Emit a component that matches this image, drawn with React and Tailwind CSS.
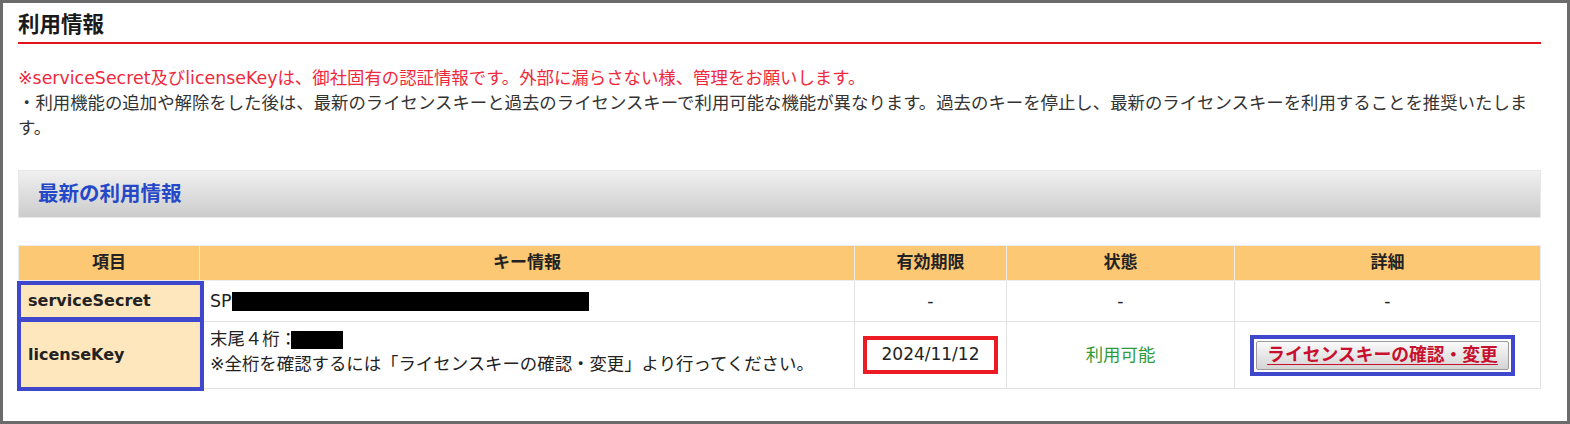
export default function App() {
  const cellB = "border-r border-b border-[#e2e2e2]";
  return (
    <div className="w-[1570px] h-[424px] box-border border-[3px] border-[#6b6b6b] bg-white pl-[15px] pr-[26px] pt-[7px] font-['DejaVu_Sans','Noto_Sans_CJK_JP',sans-serif] text-[#333]">
      <h2 className="text-[21.5px] leading-[30px] font-bold text-[#1a1a1a] pb-[2px] border-b-2 border-[#e3131b]">
        利用情報
      </h2>
      <div className="mt-[22px] text-[17.4px] leading-[25px]">
        <p className="text-[#f0283c]">
          ※serviceSecret及びlicenseKeyは、御社固有の認証情報です。外部に漏らさない様、管理をお願いします。
        </p>
        <p>
          ・利用機能の追加や解除をした後は、最新のライセンスキーと過去のライセンスキーで利用可能な機能が異なります。過去のキーを停止し、最新のライセンスキーを利用することを推奨いたします。
        </p>
      </div>
      <div className="mt-[29px] h-[48px] bg-linear-to-b from-[#f0f0f0] to-[#cccccc] border border-[#e8e8e8] flex items-center pl-[19px]">
        <h3 className="text-[20.5px] font-bold text-[#2448c8]">最新の利用情報</h3>
      </div>

      <div className="relative mt-[27px] w-[1523px]">
        <div className="grid grid-cols-[182px_655px_152px_228px_306px] text-[17.4px] text-[#222]">
          {["項目", "キー情報", "有効期限", "状態", "詳細"].map((h, i) => (
            <div
              key={h}
              className={`h-[36px] flex items-center justify-center font-bold text-[17px] bg-[#fdc874] border-t border-[#ececec] ${cellB} ${i === 0 ? "border-l" : ""}`}
            >
              {h}
            </div>
          ))}

          <div className={`h-[41px] flex items-center pl-[9px] font-bold text-[16px] bg-[#fee6bd] border-l ${cellB}`}>
            serviceSecret
          </div>
          <div className={`h-[41px] flex items-center pl-[10px] ${cellB}`}>
            <span>SP</span>
            <span className="inline-block w-[357px] h-[19px] bg-black"></span>
          </div>
          <div className={`h-[41px] flex items-center justify-center ${cellB}`}>-</div>
          <div className={`h-[41px] flex items-center justify-center ${cellB}`}>-</div>
          <div className={`h-[41px] flex items-center justify-center ${cellB}`}>-</div>

          <div className={`h-[67px] flex items-center pl-[9px] font-bold text-[16px] bg-[#fee6bd] border-l ${cellB}`}>
            licenseKey
          </div>
          <div className={`h-[67px] flex flex-col justify-center pl-[10px] pb-[6px] leading-[25px] ${cellB}`}>
            <div className="flex items-center">
              <span>末尾４桁：</span>
              <span className="inline-block w-[52px] h-[18px] bg-black -ml-[6px]"></span>
            </div>
            <div>※全桁を確認するには「ライセンスキーの確認・変更」より行ってください。</div>
          </div>
          <div className={`h-[67px] flex items-center justify-center ${cellB}`}>
            <div className="w-[135px] h-[38px] border-[4px] border-[#ed1c24] flex items-center justify-center text-[17px]">
              2024/11/12
            </div>
          </div>
          <div className={`h-[67px] flex items-center justify-center text-[#2f9a3a] ${cellB}`}>
            利用可能
          </div>
          <div className={`h-[67px] flex items-center pl-[15px] ${cellB}`}>
            <div className="w-[265px] h-[41px] border-[4px] border-[#3f48cc] p-[2px] bg-white">
              <div className="w-full h-full bg-linear-to-b from-[#fafafa] to-[#d4d4d4] border border-[#9c9c9c] rounded-[2px] flex items-center justify-center">
                <span className="font-bold text-[17.8px] text-[#c8102e] underline underline-offset-[3px]">
                  ライセンスキーの確認・変更
                </span>
              </div>
            </div>
          </div>
        </div>

        <div className="absolute left-[-1px] top-[36px] w-[187px] h-[110px] border-[4px] border-[#3f48cc] flex flex-col">
          <div className="h-[32px]"></div>
          <div className="h-[5px] bg-[#3f48cc]"></div>
          <div className="flex-1"></div>
        </div>
      </div>
    </div>
  );
}
